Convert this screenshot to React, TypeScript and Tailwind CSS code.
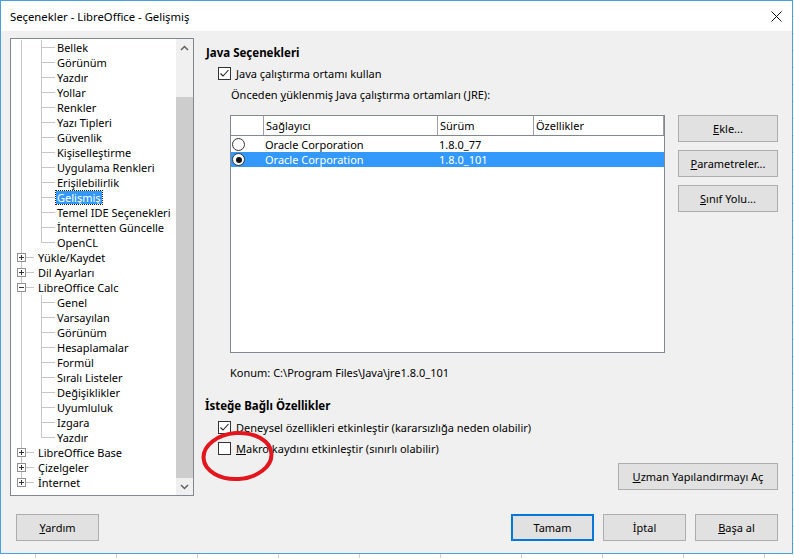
import React from "react";

type Node = { t: string; l: 1 | 2; exp?: "+" | "-"; last?: boolean; sel?: boolean };

const tree: Node[] = [
  { t: "Bellek", l: 2 },
  { t: "Görünüm", l: 2 },
  { t: "Yazdır", l: 2 },
  { t: "Yollar", l: 2 },
  { t: "Renkler", l: 2 },
  { t: "Yazı Tipleri", l: 2 },
  { t: "Güvenlik", l: 2 },
  { t: "Kişiselleştirme", l: 2 },
  { t: "Uygulama Renkleri", l: 2 },
  { t: "Erişilebilirlik", l: 2 },
  { t: "Gelişmiş", l: 2, sel: true },
  { t: "Temel IDE Seçenekleri", l: 2 },
  { t: "İnternetten Güncelle", l: 2 },
  { t: "OpenCL", l: 2, last: true },
  { t: "Yükle/Kaydet", l: 1, exp: "+" },
  { t: "Dil Ayarları", l: 1, exp: "+" },
  { t: "LibreOffice Calc", l: 1, exp: "-" },
  { t: "Genel", l: 2 },
  { t: "Varsayılan", l: 2 },
  { t: "Görünüm", l: 2 },
  { t: "Hesaplamalar", l: 2 },
  { t: "Formül", l: 2 },
  { t: "Sıralı Listeler", l: 2 },
  { t: "Değişiklikler", l: 2 },
  { t: "Uyumluluk", l: 2 },
  { t: "Izgara", l: 2 },
  { t: "Yazdır", l: 2, last: true },
  { t: "LibreOffice Base", l: 1, exp: "+" },
  { t: "Çizelgeler", l: 1, exp: "+" },
  { t: "İnternet", l: 1, exp: "+", last: true },
];

function TreeRow({ n }: { n: Node }) {
  return (
    <div className="relative h-[15px] flex items-center">
      {/* level 1 guide */}
      <span className={`absolute left-[10px] top-0 w-px bg-[#c6c6c6] ${n.l === 1 && n.last ? "h-[8px]" : "h-full"}`} />
      {n.l === 2 && (
        <>
          <span className={`absolute left-[30px] top-0 w-px bg-[#c6c6c6] ${n.last ? "h-[8px]" : "h-full"}`} />
          <span className="absolute left-[30px] top-[7px] h-px w-[14px] bg-[#c6c6c6]" />
        </>
      )}
      {n.l === 1 && (
        <>
          <span className="absolute left-[10px] top-[7px] h-px w-[13px] bg-[#c6c6c6]" />
          <span className="absolute left-[6px] top-[3px] w-[9px] h-[9px] border border-[#919191] bg-white flex items-center justify-center">
            <span className="absolute w-[5px] h-px bg-[#333]" />
            {n.exp === "+" && <span className="absolute h-[5px] w-px bg-[#333]" />}
          </span>
        </>
      )}
      <span
        className={`${n.l === 1 ? "ml-[26px]" : "ml-[45px]"} px-px leading-[13px] whitespace-nowrap ${
          n.sel ? "bg-[#3399ff] text-white outline-1 outline-dotted outline-[#222]" : "text-black"
        }`}
      >
        {n.t}
      </span>
    </div>
  );
}

function Chevron({ up }: { up?: boolean }) {
  return (
    <svg width="9" height="6" viewBox="0 0 9 6">
      <polyline
        points={up ? "1,5 4.5,1.5 8,5" : "1,1 4.5,4.5 8,1"}
        fill="none"
        stroke="#606060"
        strokeWidth="1.5"
      />
    </svg>
  );
}

function CheckBox({ checked }: { checked?: boolean }) {
  return (
    <span className="w-[13px] h-[13px] border border-[#333] bg-white flex items-center justify-center shrink-0">
      {checked && (
        <svg width="11" height="11" viewBox="0 0 11 11">
          <polyline points="1.5,5.5 4,8 9.5,2" fill="none" stroke="#222" strokeWidth="1.1" />
        </svg>
      )}
    </span>
  );
}

function Radio({ on }: { on?: boolean }) {
  return (
    <span className="w-[13px] h-[13px] rounded-full border border-[#333] bg-white flex items-center justify-center">
      {on && <span className="w-[6px] h-[6px] rounded-full bg-[#111]" />}
    </span>
  );
}

function Btn({ children, w, focus }: { children: React.ReactNode; w: string; focus?: boolean }) {
  return (
    <div
      className={`${w} h-[27px] flex items-center justify-center bg-[#e1e1e1] text-black ${
        focus ? "border-2 border-[#0078d7]" : "border border-[#adadad]"
      }`}
    >
      {children}
    </div>
  );
}

export default function App() {
  return (
    <div className="relative w-[794px] h-[558px] overflow-hidden bg-white font-['Noto_Sans',sans-serif] text-[11px] leading-[15px]">
      {/* spreadsheet behind the dialog */}
      <div className="absolute inset-0 flex">
        <div className="w-[36px] shrink-0 border-r border-[#d0d0d0]" />
        {Array.from({ length: 10 }).map((_, i) => (
          <div key={i} className="w-[81px] shrink-0 border-r border-[#d0d0d0]" />
        ))}
      </div>
      <div className="absolute inset-0 flex flex-col">
        {Array.from({ length: 34 }).map((_, i) => (
          <div key={i} className="h-[17px] shrink-0 border-b border-[#d8d8d8]" />
        ))}
      </div>

      {/* dialog window */}
      <div className="relative z-10 w-[793px] h-[554px] border border-[#4a9fe3] flex flex-col">
        <div className="h-[30px] bg-white flex items-center justify-between pl-[9px] pr-[9px]">
          <span className="text-[11.3px] text-black">Seçenekler - LibreOffice - Gelişmiş</span>
          <svg width="11" height="11" viewBox="0 0 11 11" className="mr-[1px]">
            <path d="M0.5 0.5 L10.5 10.5 M10.5 0.5 L0.5 10.5" stroke="#111" strokeWidth="1" />
          </svg>
        </div>

        <div className="flex-1 bg-[#f0f0f0] flex flex-col pl-[9px] pr-[14px] pt-[7px]">
          <div className="flex h-[458px]">
            {/* options tree */}
            <div className="w-[184px] h-full border border-[#828790] bg-white flex">
              <div className="flex-1 pt-px overflow-hidden">
                {tree.map((n, i) => (
                  <TreeRow key={i} n={n} />
                ))}
              </div>
              <div className="w-[17px] bg-[#f0f0f0] flex flex-col">
                <div className="h-[17px] flex items-center justify-center">
                  <Chevron up />
                </div>
                <div className="h-[41px]" />
                <div className="flex-1 bg-[#cdcdcd]" />
                <div className="h-[17px] flex items-center justify-center">
                  <Chevron />
                </div>
              </div>
            </div>

            {/* java panel */}
            <div className="ml-[11px] w-[573px] flex flex-col text-black">
              <div className="mt-[7px] h-[16px] leading-[16px] font-bold text-[11.5px] pl-px">Java Seçenekleri</div>
              <div className="mt-[4px] h-[16px] ml-[13px] flex items-center gap-[5px]">
                <CheckBox checked />
                <span>
                  <u>J</u>ava çalıştırma ortamı kullan
                </span>
              </div>
              <div className="mt-[6px] h-[16px] leading-[16px] ml-[26px]">
                Önceden <u>y</u>üklenmiş Java çalıştırma ortamları (JRE):
              </div>

              <div className="mt-[12px] ml-[25px] flex">
                <div className="w-[435px] h-[238px] border border-[#828790] bg-white flex flex-col">
                  <div className="h-[20px] flex border-b border-[#828790]">
                    <div className="w-[33px] border-r border-[#a0a0a0]" />
                    <div className="w-[174px] border-r border-[#a0a0a0] pl-[2px] leading-[19px]">Sağlayıcı</div>
                    <div className="w-[96px] border-r border-[#a0a0a0] pl-[2px] leading-[19px]">Sürüm</div>
                    <div className="flex-1 border-r border-[#a0a0a0] pl-[2px] leading-[19px]">Özellikler</div>
                  </div>
                  <div className="h-[16px] flex items-center">
                    <div className="w-[33px] pl-px flex items-center">
                      <Radio />
                    </div>
                    <div className="w-[174px] pl-px">Oracle Corporation</div>
                    <div className="w-[96px] pl-px">1.8.0_77</div>
                  </div>
                  <div className="h-[15px] flex items-center bg-[#3399ff] text-white">
                    <div className="w-[33px] pl-px flex items-center">
                      <Radio on />
                    </div>
                    <div className="w-[174px] pl-px">Oracle Corporation</div>
                    <div className="w-[96px] pl-px">1.8.0_101</div>
                  </div>
                </div>
                <div className="ml-[13px] flex flex-col gap-[8px]">
                  <Btn w="w-[100px]">
                    <span>
                      <u>E</u>kle...
                    </span>
                  </Btn>
                  <Btn w="w-[100px]">
                    <span>
                      <u>P</u>arametreler...
                    </span>
                  </Btn>
                  <Btn w="w-[100px]">
                    <span>
                      <u>S</u>ınıf Yolu...
                    </span>
                  </Btn>
                </div>
              </div>

              <div className="mt-[12px] h-[16px] leading-[16px] ml-[25px]">
                Konum: C:\Program Files\Java\jre1.8.0_101
              </div>

              <div className="mt-[17px] h-[16px] leading-[16px] font-bold text-[11.5px]">İsteğe Bağlı Özellikler</div>
              <div className="mt-[5px] h-[16px] ml-[13px] flex items-center gap-[5px]">
                <CheckBox checked />
                <span>Deneysel özellikleri etkinleştir (kararsızlığa neden olabilir)</span>
              </div>
              <div className="mt-[5px] h-[16px] ml-[13px] flex items-center gap-[5px]">
                <CheckBox />
                <span>
                  <u>M</u>akro kaydını etkinleştir (sınırlı olabilir)
                </span>
              </div>
              <div className="mt-[7px] flex justify-end">
                <Btn w="w-[160px]">
                  <span>
                    <u>U</u>zman Yapılandırmayı Aç
                  </span>
                </Btn>
              </div>
            </div>
          </div>

          {/* dialog buttons */}
          <div className="mt-[18px] flex items-center">
            <div className="ml-[6px]">
              <Btn w="w-[83px]">
                <span>
                  <u>Y</u>ardım
                </span>
              </Btn>
            </div>
            <div className="ml-auto flex gap-[9px]">
              <Btn w="w-[83px]" focus>
                Tamam
              </Btn>
              <Btn w="w-[83px]">İptal</Btn>
              <Btn w="w-[83px]">
                <span>
                  <u>B</u>aşa al
                </span>
              </Btn>
            </div>
          </div>
        </div>
      </div>

      {/* red hand-drawn marker */}
      <svg className="absolute left-[200px] top-[429px] z-20 pointer-events-none" width="80" height="56" viewBox="0 0 80 56">
        <ellipse cx="37.5" cy="27" rx="34" ry="23" fill="none" stroke="#e3151d" strokeWidth="4" transform="rotate(-4 37.5 27)" />
      </svg>
    </div>
  );
}
